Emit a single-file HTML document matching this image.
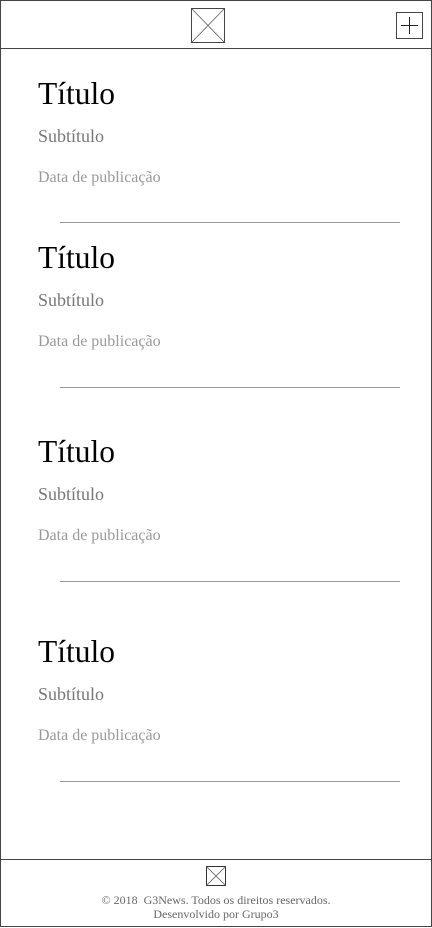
<!DOCTYPE html>
<html><head><meta charset="utf-8"><style>
*{margin:0;padding:0;box-sizing:border-box}
body{width:432px;height:928px;background:#fff;font-family:"Liberation Serif",serif;position:relative;overflow:hidden}
.frame{position:absolute;left:0;top:0;width:432px;height:927px;border:1px solid #444}
.hline{position:absolute;left:0;width:432px;height:1px;background:#444}
.a{position:absolute;white-space:nowrap;line-height:1}
.t{left:38px;font-size:31.5px;color:#000}
.s{left:38px;font-size:18px;color:#777}
.d{left:38px;font-size:16px;color:#999}
.l{position:absolute;left:60px;width:340px;height:1px;background:#999}
.f{left:0;width:432px;text-align:center;font-size:12px;color:#666}
</style></head><body>
<div class="frame"></div>
<div class="hline" style="top:48px"></div>
<div class="hline" style="top:859px"></div>
<svg style="position:absolute;left:191px;top:8px" width="34" height="35"><rect x="0.5" y="0.5" width="33" height="34" fill="none" stroke="#444"/><path d="M0.5 0.5L33.5 34.5M33.5 0.5L0.5 34.5" stroke="#555" stroke-width="0.8"/></svg>
<svg style="position:absolute;left:396px;top:12px" width="27" height="27"><rect x="0.5" y="0.5" width="26" height="26" fill="none" stroke="#444"/><path d="M13.5 5V22M5 13.5H22" stroke="#222" stroke-width="1"/></svg>

<div class="a t" style="top:78px">Título</div>
<div class="a s" style="top:127px">Subtítulo</div>
<div class="a d" style="top:170px">Data de publicação</div>
<div class="l" style="top:222px"></div>

<div class="a t" style="top:242px">Título</div>
<div class="a s" style="top:291px">Subtítulo</div>
<div class="a d" style="top:334px">Data de publicação</div>
<div class="l" style="top:387px"></div>

<div class="a t" style="top:436px">Título</div>
<div class="a s" style="top:485px">Subtítulo</div>
<div class="a d" style="top:528px">Data de publicação</div>
<div class="l" style="top:581px"></div>

<div class="a t" style="top:636px">Título</div>
<div class="a s" style="top:685px">Subtítulo</div>
<div class="a d" style="top:728px">Data de publicação</div>
<div class="l" style="top:781px"></div>

<svg style="position:absolute;left:206px;top:866px" width="20" height="20"><rect x="0.5" y="0.5" width="19" height="19" fill="none" stroke="#333"/><path d="M0.5 0.5L19.5 19.5M19.5 0.5L0.5 19.5" stroke="#555" stroke-width="0.8"/></svg>
<div class="a f" style="top:894px">© 2018&nbsp; G3News. Todos os direitos reservados.</div>
<div class="a f" style="top:908px">Desenvolvido por Grupo3</div>
</body></html>
